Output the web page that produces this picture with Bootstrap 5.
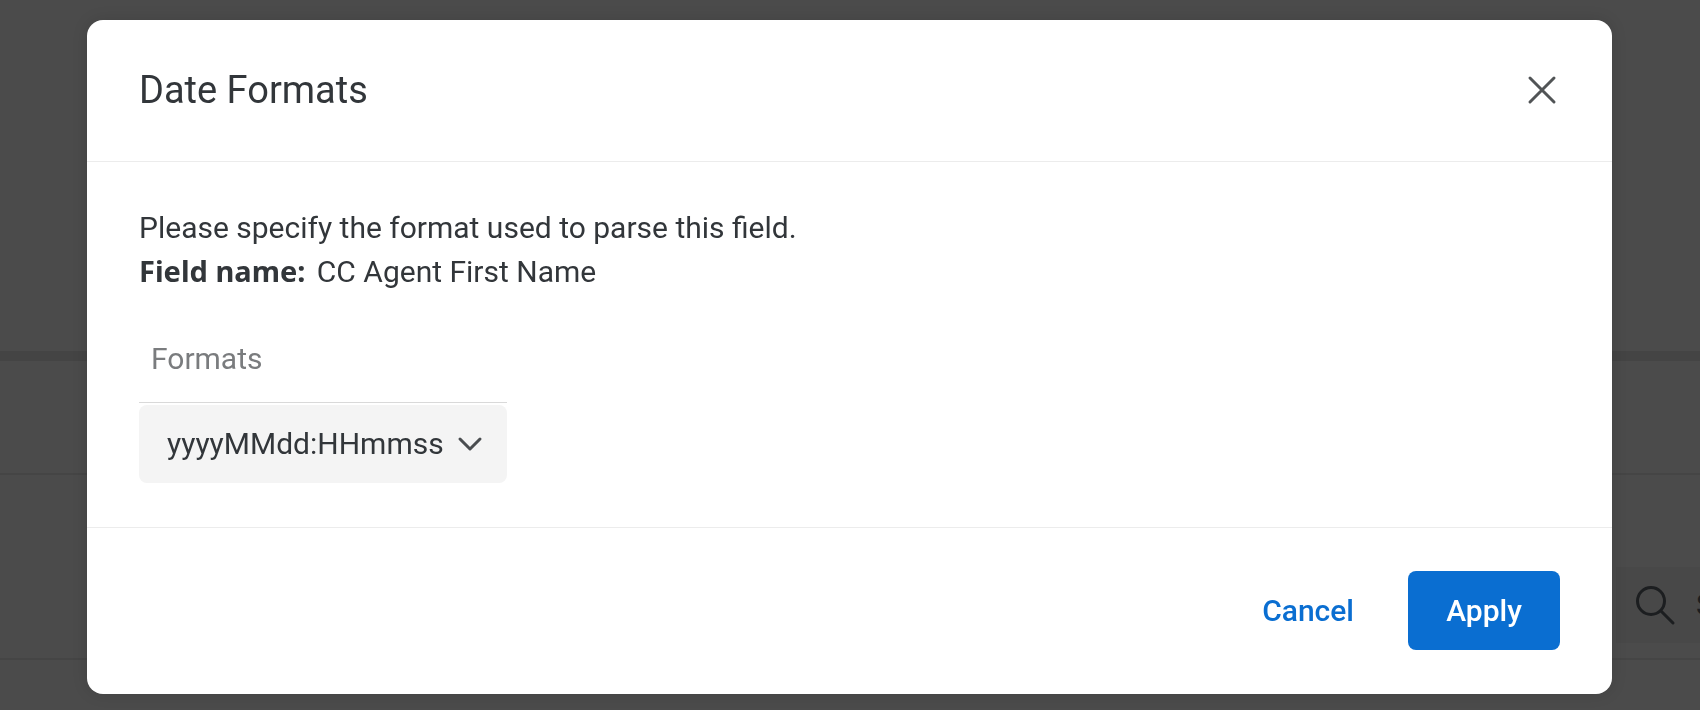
<!DOCTYPE html>
<html lang="en">
<head>
<meta charset="utf-8">
<meta name="viewport" content="width=device-width, initial-scale=1">
<title>Date Formats</title>
<link rel="stylesheet" href="https://cdn.jsdelivr.net/npm/bootstrap@5.3.0/dist/css/bootstrap.min.css">
<style>
  body { font-family: Roboto, "Liberation Sans", sans-serif; font-size: 30px; line-height: 44px; color: #32363a; background: #4b4b4b; }
  .backpage { min-height: 100vh; overflow: hidden; }
  .back-head { height: 351px; border-bottom: 10px solid #444; box-sizing: content-box; }
  .back-row { height: 114px; border-bottom: 2px solid #454545; }
  .back-tools { height: 185px; border-bottom: 2px solid #454545; padding-top: 92px; }
  .back-search { width: 84px; height: 76px; padding-left: 18px; gap: 20px; background: #484848; overflow: hidden; }
  .back-search input { width: 200px; border: 0; padding: 0; background: transparent; color: #1c1e20; }
  .date-modal { padding: 20px 88px 16px 87px; }
  .date-modal .modal-dialog { max-width: none; margin: 0; }
  .date-modal .modal-content { border: 0; border-radius: 16px; color: inherit; box-shadow: 0 0 16px rgba(0,0,0,.12); }
  .date-modal .modal-header { height: 142px; padding: 0 52px 2px; border-color: #ececec; }
  .date-modal .modal-title { font-size: 38px; line-height: 48px; font-weight: 400; }
  .close-btn { width: 36px; height: 36px; line-height: 0; }
  .date-modal .modal-body { padding: 44px 52px; }
  .field-key { font-family: "Noto Sans", sans-serif; font-size: 29px; line-height: 1; }
  .format-field { width: 368px; margin-top: 43px; }
  .format-field label { padding: 0 12px 21px; color: #7a7c7e; border-bottom: 1px solid #d9d9d9; margin-bottom: 2px; }
  .format-field select { height: 78px; padding: 0 56px 0 28px; border: 0; border-radius: 8px; background: #f4f4f4; color: #32363a; appearance: none; }
  .chev { right: 24px; top: 0; bottom: 0; margin: auto; pointer-events: none; }
  .date-modal .modal-footer { padding: 43px 52px 44px; gap: 26px; border-color: #ececec; }
  .date-modal .modal-footer > * { margin: 0; }
  .act { height: 79px; font: inherit; font-weight: 500; border: 0; border-radius: 8px; padding: 0 28px; }
  .act-cancel { color: #0a6ed1; }
  .act-apply, .act-apply:hover { width: 152px; background: #0a6ed1; color: #fff; }
</style>
</head>
<body class="overflow-hidden">
<div class="backpage" inert>
  <div class="back-head"></div>
  <div class="back-row"></div>
  <div class="back-tools d-flex justify-content-end">
    <div class="back-search d-flex align-items-center">
      <svg class="flex-shrink-0" width="42" height="42" viewBox="0 0 42 42" fill="none" stroke="#1c1e20" stroke-width="3" stroke-linecap="round"><circle cx="17" cy="17" r="13.5"/><path d="M27 27L39 39"/></svg>
      <input class="flex-shrink-0" type="text" value="Search" aria-label="Search">
    </div>
  </div>
</div>

<div class="modal date-modal d-block" tabindex="-1" role="dialog" aria-modal="true" aria-labelledby="dlgTitle">
  <div class="modal-dialog">
    <div class="modal-content">
      <div class="modal-header">
        <h1 class="modal-title" id="dlgTitle">Date Formats</h1>
        <button type="button" class="btn p-0 border-0 close-btn" aria-label="Close">
          <svg width="36" height="36" viewBox="0 0 36 36" fill="none" stroke="#515456" stroke-width="3" stroke-linecap="round"><path d="M6 6L30 30M30 6L6 30"/></svg>
        </button>
      </div>
      <div class="modal-body">
        <p class="mb-0">Please specify the format used to parse this field.</p>
        <p class="mb-0"><b class="field-key me-1">Field name:</b> CC Agent First Name</p>
        <div class="format-field">
          <label class="d-block" for="fmt">Formats</label>
          <div class="position-relative">
            <select class="w-100 d-block" id="fmt"><option>yyyyMMdd:HHmmss</option></select>
            <svg class="chev position-absolute" width="26" height="16" viewBox="0 0 26 16" fill="none" stroke="#4a4d50" stroke-width="3" stroke-linecap="round" stroke-linejoin="round"><path d="M3 3L13 13L23 3"/></svg>
          </div>
        </div>
      </div>
      <div class="modal-footer">
        <button type="button" class="btn act act-cancel">Cancel</button>
        <button type="button" class="btn act act-apply">Apply</button>
      </div>
    </div>
  </div>
</div>
<script src="https://cdn.jsdelivr.net/npm/bootstrap@5.3.0/dist/js/bootstrap.bundle.min.js"></script>
</body>
</html>
